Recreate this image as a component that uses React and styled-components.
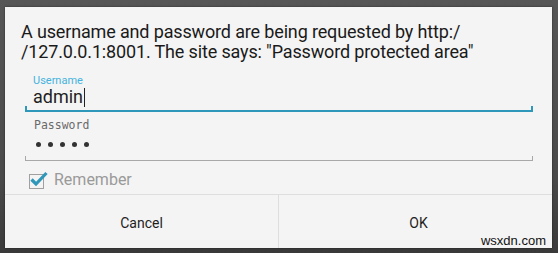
import React from "react";
import styled, { createGlobalStyle } from "styled-components";

const Global = createGlobalStyle`
  html, body { margin: 0; padding: 0; }
  body {
    width: 558px; height: 253px; overflow: hidden;
    background: linear-gradient(180deg, #565656 0%, #4a4a4a 70%, #3a3a3a 100%);
    font-family: Roboto, "Noto Sans", sans-serif;
  }
`;

const Screen = styled.div`
  width: 558px;
  height: 253px;
  box-sizing: border-box;
  padding: 7px 6px 5px 5px;
  display: flex;
`;

const Dialog = styled.div`
  flex: 1;
  background: #f4f4f4;
  display: flex;
  flex-direction: column;
  position: relative;
  box-shadow: 0 0 2px rgba(0,0,0,0.5);
`;

const Body = styled.div`
  flex: 1;
  display: flex;
  flex-direction: column;
  padding: 15px 19px 0 16px;
`;

const Message = styled.p`
  margin: 0;
  font-size: 18px;
  line-height: 20px;
  color: #1a1a1a;
  letter-spacing: -0.15px;
`;

const Field = styled.div`
  margin: ${p => p.$top}px 0 0 4px;
  position: relative;
  padding: 0 0 0 8px;
  height: ${p => p.$h}px;
  box-sizing: border-box;
  display: flex;
  flex-direction: column;
  border-bottom: ${p => (p.$focused ? "2px solid #2f97b9" : "1px solid #a8a8a8")};
  &::before, &::after {
    content: "";
    position: absolute;
    bottom: 0;
    width: ${p => (p.$focused ? 2 : 1)}px;
    height: 4px;
    background: ${p => (p.$focused ? "#2f97b9" : "#a8a8a8")};
  }
  &::before { left: 0; }
  &::after { right: 0; }
`;

const Label = styled.div`
  font-family: ${p => (p.$mono ? '"DejaVu Sans Mono", "Liberation Mono", monospace' : 'Roboto, sans-serif')};
  font-size: ${p => (p.$mono ? 11.5 : 11)}px;
  line-height: 11px;
  color: ${p => (p.$focused ? "#45b3de" : "#6a6a6a")};
  margin-left: ${p => (p.$mono ? 1 : 0)}px;
`;

const Value = styled.div`
  font-size: 18px;
  line-height: 20px;
  color: #1e1e1e;
  display: flex;
  align-items: center;
  margin-top: 1px;
`;

const Caret = styled.span`
  display: inline-block;
  width: 1px;
  height: 19px;
  background: #222;
  margin-left: 1px;
`;

const Dots = styled.div`
  display: flex;
  gap: 7px;
  margin-top: 11px;
  margin-left: 3px;
`;

const Dot = styled.span`
  width: 5px;
  height: 5px;
  border-radius: 50%;
  background: #333;
`;

const CheckRow = styled.label`
  display: flex;
  align-items: center;
  gap: 4px;
  margin: 9px 0 0 8px;
  font-size: 16px;
  color: #9a9a9a;
`;

const Buttons = styled.div`
  height: 53px;
  border-top: 1px solid #dedede;
  display: grid;
  grid-template-columns: 1fr 1px 1fr;
`;

const Sep = styled.div`
  background: #dedede;
`;

const Button = styled.button`
  border: 0;
  background: transparent;
  font-family: Roboto, sans-serif;
  font-size: 14px;
  color: #1e1e1e;
  padding: 3px 0 0 ${p => (p.$shift ? 6 : 0)}px;
`;

const Watermark = styled.div`
  position: absolute;
  right: 6px;
  bottom: 0px;
  font-family: "Liberation Sans", Arial, sans-serif;
  font-size: 13px;
  color: #111;
`;

const CheckIcon = () => (
  <svg width="21" height="18" viewBox="0 0 21 18">
    <rect x="0.5" y="3.5" width="14" height="14" fill="none" stroke="#a0a0a0" strokeWidth="1" />
    <path d="M2.5 8.5 L7 13 L17.5 2" fill="none" stroke="#2f97b9" strokeWidth="3.2" strokeLinejoin="miter" />
  </svg>
);

export default function App() {
  return (
    <>
      <Global />
      <Screen>
        <Dialog>
          <Body>
            <Message>
              A username and password are being requested by http:/
              <br />
              /127.0.0.1:8001. The site says: "Password protected area"
            </Message>
            <Field $focused $top={13} $h={37}>
              <Label $focused>Username</Label>
              <Value>admin<Caret /></Value>
            </Field>
            <Field $top={8} $h={41}>
              <Label $mono>Password</Label>
              <Dots>
                <Dot /><Dot /><Dot /><Dot /><Dot />
              </Dots>
            </Field>
            <CheckRow>
              <CheckIcon />
              Remember
            </CheckRow>
          </Body>
          <Buttons>
            <Button>Cancel</Button>
            <Sep />
            <Button $shift>OK</Button>
          </Buttons>
          <Watermark>wsxdn.com</Watermark>
        </Dialog>
      </Screen>
    </>
  );
}
